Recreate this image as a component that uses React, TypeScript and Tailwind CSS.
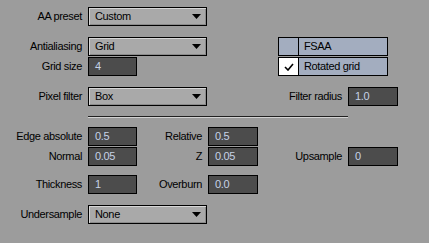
import React from "react";

const font = { fontFamily: '"Liberation Sans", Arial, sans-serif' };

const Dropdown = ({ value }: { value: string }) => (
  <div className="relative flex h-[19px] w-[119px] items-center border border-black bg-[#a9a9a9] pl-[6px] text-black shadow-[inset_1px_1px_0_#d6d6d6,inset_-1px_-1px_0_#8a8a8a]">
    {value}
    <svg className="absolute right-[5px] top-[6px]" width="9" height="5" viewBox="0 0 9 5">
      <path d="M0 0H9L4.5 5Z" fill="#000" />
    </svg>
  </div>
);

const Field = ({ value, w = "w-[49px]" }: { value: string; w?: string }) => (
  <div className={`flex h-[19px] ${w} items-center border border-black bg-[#4c4c4c] pl-[6px] text-[#c6d2e6]`}>
    {value}
  </div>
);

const Label = ({ text, w }: { text: string; w: string }) => (
  <div className={`${w} pr-[6px] text-right text-black`}>{text}</div>
);

const Check = ({ text, checked }: { text: string; checked?: boolean }) => (
  <div className="flex h-[19px] w-[110px] border border-black bg-[#a3adbf]">
    <div className={`flex w-[20px] items-center justify-center border-r border-black ${checked ? "bg-white" : ""}`}>
      {checked && (
        <svg width="10" height="8" viewBox="0 0 10 8">
          <path d="M1 4L4 7L9 1" stroke="#000" strokeWidth="1.6" fill="none" />
        </svg>
      )}
    </div>
    <div className="flex items-center pl-[5px] text-black">{text}</div>
  </div>
);

export default function App() {
  return (
    <div className="h-[243px] w-[429px] bg-[#9c9c9c] pt-[7px] text-[11px] leading-none tracking-[-0.35px]" style={font}>
      <div className="flex items-center">
        <Label text="AA preset" w="w-[88px]" />
        <Dropdown value="Custom" />
      </div>

      <div className="mt-[11px] flex items-center">
        <Label text="Antialiasing" w="w-[88px]" />
        <Dropdown value="Grid" />
        <div className="ml-[71px]">
          <Check text="FSAA" />
        </div>
      </div>
      <div className="mt-[1px] flex items-center">
        <Label text="Grid size" w="w-[88px]" />
        <Field value="4" />
        <div className="ml-[141px]">
          <Check text="Rotated grid" checked />
        </div>
      </div>

      <div className="mt-[11px] flex items-center">
        <Label text="Pixel filter" w="w-[88px]" />
        <Dropdown value="Box" />
        <Label text="Filter radius" w="w-[141px]" />
        <Field value="1.0" w="w-[50px]" />
      </div>

      <div className="ml-[88px] mt-[10px] h-[2px] w-[260px] border-b border-t border-b-[#d2d2d2] border-t-[#202020]" />

      <div className="mt-[9px] flex items-center">
        <Label text="Edge absolute" w="w-[88px]" />
        <Field value="0.5" />
        <Label text="Relative" w="w-[71px]" />
        <Field value="0.5" w="w-[50px]" />
      </div>
      <div className="mt-[1px] flex items-center">
        <Label text="Normal" w="w-[88px]" />
        <Field value="0.05" />
        <Label text="Z" w="w-[71px]" />
        <Field value="0.05" w="w-[50px]" />
        <Label text="Upsample" w="w-[90px]" />
        <Field value="0" w="w-[50px]" />
      </div>

      <div className="mt-[9px] flex items-center">
        <Label text="Thickness" w="w-[88px]" />
        <Field value="1" />
        <Label text="Overburn" w="w-[71px]" />
        <Field value="0.0" w="w-[50px]" />
      </div>

      <div className="mt-[11px] flex items-center">
        <Label text="Undersample" w="w-[88px]" />
        <Dropdown value="None" />
      </div>
    </div>
  );
}
